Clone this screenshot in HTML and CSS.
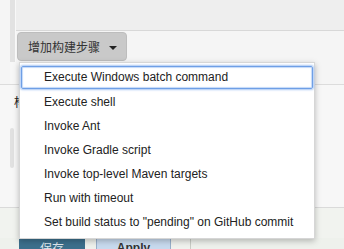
FILE: index.html
```html
<!DOCTYPE html>
<html lang="zh">
<head>
  <meta charset="UTF-8" />
  <meta name="viewport" content="width=device-width, initial-scale=1" />
  <title>构建步骤</title>
  <link rel="stylesheet" href="styles.css">
</head>
<body>

  <div class="top">
    <div class="rail"></div>
    <div class="edge"></div>
    <div class="main">
      <div class="box"></div>
      <div class="add-row">
        <button class="btn-add">增加构建步骤 <span class="caret"></span></button>
      </div>
    </div>
  </div>

  <div class="post">
    <div class="post-label">构建后操作</div>
    <div class="post-body">
      <div class="scroll-stub"></div>
    </div>
    <div class="post-foot"></div>
  </div>

  <div class="bottom-bar">
    <button class="btn-save">保存</button>
    <button class="btn-apply">Apply</button>
    <div class="bar-rest"></div>
  </div>

  <ul class="menu">
    <li class="menu-item focused">Execute Windows batch command</li>
    <li class="menu-item">Execute shell</li>
    <li class="menu-item">Invoke Ant</li>
    <li class="menu-item">Invoke Gradle script</li>
    <li class="menu-item">Invoke top-level Maven targets</li>
    <li class="menu-item">Run with timeout</li>
    <li class="menu-item">Set build status to "pending" on GitHub commit</li>
  </ul>

</body>
</html>
```

FILE: styles.css
```css
* {
  box-sizing: border-box;
  margin: 0;
  padding: 0;
}

body {
  position: relative;
  width: 344px;
  height: 249px;
  overflow: hidden;
  font-family: 'Liberation Sans', Arial, 'Noto Sans CJK SC', sans-serif;
  font-size: 12px;
  color: #333;
  background: #f7f7f7;
}

.top {
  display: flex;
  height: 85px;
  border-bottom: 1px solid #dcdcdc;
}

.rail {
  width: 10px;
  background: #f5f5f5;
}

.edge {
  width: 6px;
  height: 62px;
  background: #e2e2e2;
  border-right: 1px solid #f8f8f8;
}

.main {
  flex: 1;
  background: #f5f5f5;
}

.box {
  height: 31px;
  background: #eeeeee;
  border-bottom: 1px solid #d8d8d8;
}

.add-row {
  display: flex;
  padding: 1px 0 0 1px;
}

.btn-add {
  display: flex;
  align-items: center;
  gap: 9px;
  height: 29px;
  padding: 0 9px 0 10px;
  border: 1px solid #bdbdbd;
  border-radius: 4px;
  background: #c9c9c9;
  color: #333;
  font-family: 'Noto Sans CJK SC', sans-serif;
  font-size: 12px;
  white-space: nowrap;
}

.caret {
  width: 0;
  height: 0;
  border-left: 4px solid transparent;
  border-right: 4px solid transparent;
  border-top: 4px solid #222;
  margin-top: 2px;
}

.post {
  height: 153px;
  display: flex;
  flex-direction: column;
  background: #f7f7f7;
}

.post-label {
  padding: 8px 0 0 14px;
  height: 26px;
  font-family: 'Noto Sans CJK SC', sans-serif;
  font-size: 12px;
  color: #222;
  white-space: nowrap;
}

.post-body {
  flex: 1;
  padding: 17px 0 0 10px;
  border-bottom: 1px solid #dadada;
}

.scroll-stub {
  width: 4px;
  height: 40px;
  border-radius: 2px;
  background: #e1e1e1;
}

.post-foot {
  height: 30px;
  background: #f1f3ef;
}

.bottom-bar {
  display: flex;
  height: 11px;
  padding-left: 19px;
  background: #eef1ec;
}

.btn-save {
  width: 66px;
  height: 20px;
  border: none;
  background: #3c6f8c;
  color: #dfe8ee;
  font-family: 'Noto Sans CJK SC', sans-serif;
  font-size: 12px;
  line-height: 14px;
  align-self: flex-start;
}

.btn-apply {
  margin-left: 11px;
  width: 75px;
  height: 20px;
  border: 1px solid #97afca;
  background: #c8daee;
  color: #333;
  font-family: 'Liberation Sans', Arial, sans-serif;
  font-weight: bold;
  font-size: 12px;
  line-height: 14px;
  align-self: flex-start;
}

.bar-rest {
  width: 20px;
  border-right: 1px solid #c9cdc6;
  background: #f0f2ee;
}

.menu {
  position: absolute;
  left: 19px;
  top: 62px;
  width: 296px;
  list-style: none;
  padding: 3px 1px 4px 1px;
  background: #fff;
  border: 1px solid #d6d6d6;
  box-shadow: 0 2px 6px rgba(0, 0, 0, 0.25);
}

.menu-item {
  height: 24px;
  line-height: 24px;
  padding-left: 23px;
  color: #222;
  white-space: nowrap;
}

.menu-item.focused {
  height: 23px;
  line-height: 21px;
  margin: 0 0 1px 0;
  border: 1px solid #6e9fe6;
  border-radius: 2px;
  box-shadow: 0 0 2px 1px #a9c7f3, inset 0 0 1px 1px #c4d9f8;
  padding-left: 22px;
}
```
